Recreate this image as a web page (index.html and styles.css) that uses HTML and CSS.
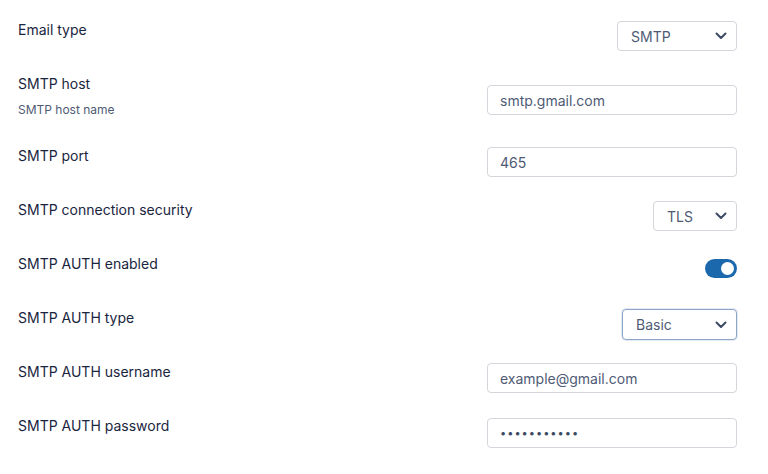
FILE: index.html
```html
<!DOCTYPE html>
<html lang="en">
<head>
<meta charset="utf-8">
<title>Email settings</title>
<link rel="stylesheet" href="styles.css">
</head>
<body>
<form class="settings">
  <div class="row">
    <div class="label">Email type</div>
    <div class="select select--smtp"><span>SMTP</span><svg class="chev" viewBox="0 0 12 8" width="12" height="8"><path d="M1.5 1.5 6 6 10.5 1.5" fill="none" stroke="#3d4a63" stroke-width="2" stroke-linecap="round" stroke-linejoin="round"/></svg></div>
  </div>
  <div class="row row--desc">
    <div class="labels">
      <div class="label">SMTP host</div>
      <div class="desc">SMTP host name</div>
    </div>
    <div class="input input--low">smtp.gmail.com</div>
  </div>
  <div class="row">
    <div class="label">SMTP port</div>
    <div class="input">465</div>
  </div>
  <div class="row">
    <div class="label">SMTP connection security</div>
    <div class="select select--tls"><span>TLS</span><svg class="chev" viewBox="0 0 12 8" width="12" height="8"><path d="M1.5 1.5 6 6 10.5 1.5" fill="none" stroke="#3d4a63" stroke-width="2" stroke-linecap="round" stroke-linejoin="round"/></svg></div>
  </div>
  <div class="row">
    <div class="label">SMTP AUTH enabled</div>
    <div class="toggle"><span class="knob"></span></div>
  </div>
  <div class="row">
    <div class="label">SMTP AUTH type</div>
    <div class="select select--basic is-focused"><span>Basic</span><svg class="chev" viewBox="0 0 12 8" width="12" height="8"><path d="M1.5 1.5 6 6 10.5 1.5" fill="none" stroke="#3d4a63" stroke-width="2" stroke-linecap="round" stroke-linejoin="round"/></svg></div>
  </div>
  <div class="row">
    <div class="label">SMTP AUTH username</div>
    <div class="input">example@gmail.com</div>
  </div>
  <div class="row">
    <div class="label">SMTP AUTH password</div>
    <div class="input input--pwrow"><span class="dots">•••••••••••</span></div>
  </div>
</form>
</body>
</html>
```

FILE: styles.css
```css
* { box-sizing: border-box; }
html, body { margin: 0; padding: 0; background: #ffffff; }
body {
  font-family: Inter, "Noto Sans", "Liberation Sans", sans-serif;
  color: #1a2540;
}
.settings {
  width: 768px;
  padding: 20px 31px 0 18px;
}
.row {
  display: flex;
  justify-content: space-between;
  align-items: flex-start;
  min-height: 54px;
}
.row--desc { min-height: 72px; }
.labels { display: flex; flex-direction: column; gap: 7px; }
.label {
  font-size: 14px;
  line-height: 20px;
  font-weight: 400;
  color: #1a2540;
}
.desc {
  font-size: 12px;
  line-height: 17px;
  color: #4f5b75;
}
.input, .select {
  height: 30px;
  margin-top: 1px;
  border: 1px solid #d3d6db;
  border-radius: 4px;
  font-size: 14px;
  color: #4f5b75;
  display: flex;
  align-items: center;
  background: #fff;
}
.input { width: 250px; padding-left: 12px; }
.input--low { margin-top: 11px; }
.input--pwrow { margin-top: 2px; }
.select { justify-content: space-between; padding: 0 9px 0 13px; }
.select--smtp { width: 120px; }
.select--tls { width: 84px; }
.select--basic { width: 115px; height: 31px; }
.is-focused {
  border-color: #8ea7c8;
  box-shadow: 0 0 0 1px rgba(142, 167, 200, 0.25);
}
.chev { display: block; }
.dots {
  font-size: 11px;
  letter-spacing: 1px;
  color: #3d4a63;
}
.toggle {
  margin-top: 5px;
  width: 32px;
  height: 19px;
  border-radius: 10px;
  background: #1b68ac;
  display: flex;
  align-items: center;
  justify-content: flex-end;
  padding-right: 3px;
}
.knob {
  width: 13px;
  height: 13px;
  border-radius: 50%;
  background: #fff;
}
```
